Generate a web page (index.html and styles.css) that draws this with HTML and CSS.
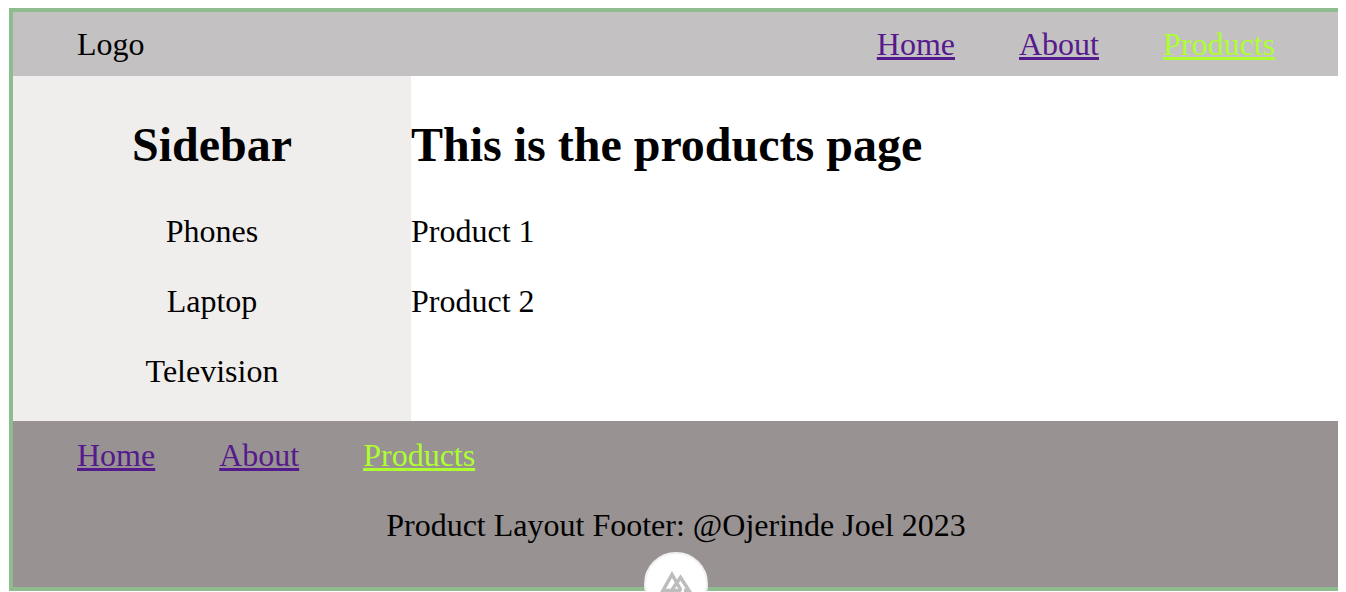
FILE: index.html
```html
<!doctype html>
<html>

<head>
    <meta charset="utf-8">
    <title>Products</title>
    <meta name="viewport" content="width=device-width,initial-scale=1">
    <link rel="stylesheet" href="styles.css">
</head>

<body>
    <div class="container">
        <header class="header">
            <div class="logo">Logo</div>
            <nav class="nav">
                <a class="link" href="#home">Home</a>
                <a class="link" href="#about">About</a>
                <a class="link active" href="#products">Products</a>
            </nav>
        </header>
        <div class="main">
            <aside class="sidebar">
                <h1>Sidebar</h1>
                <p>Phones</p>
                <p>Laptop</p>
                <p>Television</p>
            </aside>
            <section class="content">
                <h1>This is the products page</h1>
                <p>Product 1</p>
                <p>Product 2</p>
            </section>
        </div>
        <footer class="footer">
            <nav class="nav">
                <a class="link" href="#home">Home</a>
                <a class="link" href="#about">About</a>
                <a class="link active" href="#products">Products</a>
            </nav>
            <p class="credit">Product Layout Footer: @Ojerinde Joel 2023</p>
        </footer>
        <!-- devtools button, cut off by the window edge -->
        <div class="devtools">
            <svg viewBox="0 0 32 22" aria-hidden="true" focusable="false">
                <path d="M10 19.5H3L12 3.5l8 14q1 2-1.500 2H11.500l9-13 8.500 13H24" />
            </svg>
        </div>
    </div>
</body>

</html>
```

FILE: styles.css
```css
html,
body {
    height: 100%;
}

body {
    margin: 8px 8px 0 9px;
    font-family: "Liberation Serif", "Times New Roman", serif;
    font-size: 32px;
    color: #000;
    background: #fff;
    overflow: hidden;
}

.container {
    position: relative;
    width: 1334px;
    height: 583px;
    box-sizing: border-box;
    border: 4px solid #8fbc8f;
    display: flex;
    flex-direction: column;
}

.header {
    height: 64px;
    flex-shrink: 0;
    display: flex;
    justify-content: space-between;
    align-items: center;
    padding: 0 64px;
    background: #c4c1c2;
}

.nav {
    display: flex;
    gap: 64px;
}

.link {
    color: #551a8b;
}

.link.active {
    color: #adff2f;
}

.main {
    flex: 1;
    display: flex;
}

.sidebar {
    width: 398px;
    background: #f0eeed;
    text-align: center;
}

.content {
    flex: 1;
}

.main h1 {
    margin: 0;
    padding-top: 40px;
    height: 120px;
    box-sizing: border-box;
    font-size: 48px;
    line-height: 58px;
}

.main p {
    margin: 0;
    height: 70px;
    line-height: 70px;
}

.footer {
    height: 166px;
    flex-shrink: 0;
    padding: 16px 64px 0;
    box-sizing: border-box;
    background: #989292;
}

.credit {
    margin: 33px 0 0;
    text-align: center;
}

.devtools {
    position: absolute;
    left: 631px;
    top: 540px;
    width: 64px;
    height: 64px;
    box-sizing: border-box;
    border: 2px solid #f0f0f0;
    border-radius: 50%;
    background: #fff;
    display: flex;
    justify-content: center;
    padding-top: 17px;
}

.devtools svg {
    width: 32px;
    height: 22px;
    fill: none;
    stroke: #bdbdbd;
    stroke-width: 3.5;
}
```
